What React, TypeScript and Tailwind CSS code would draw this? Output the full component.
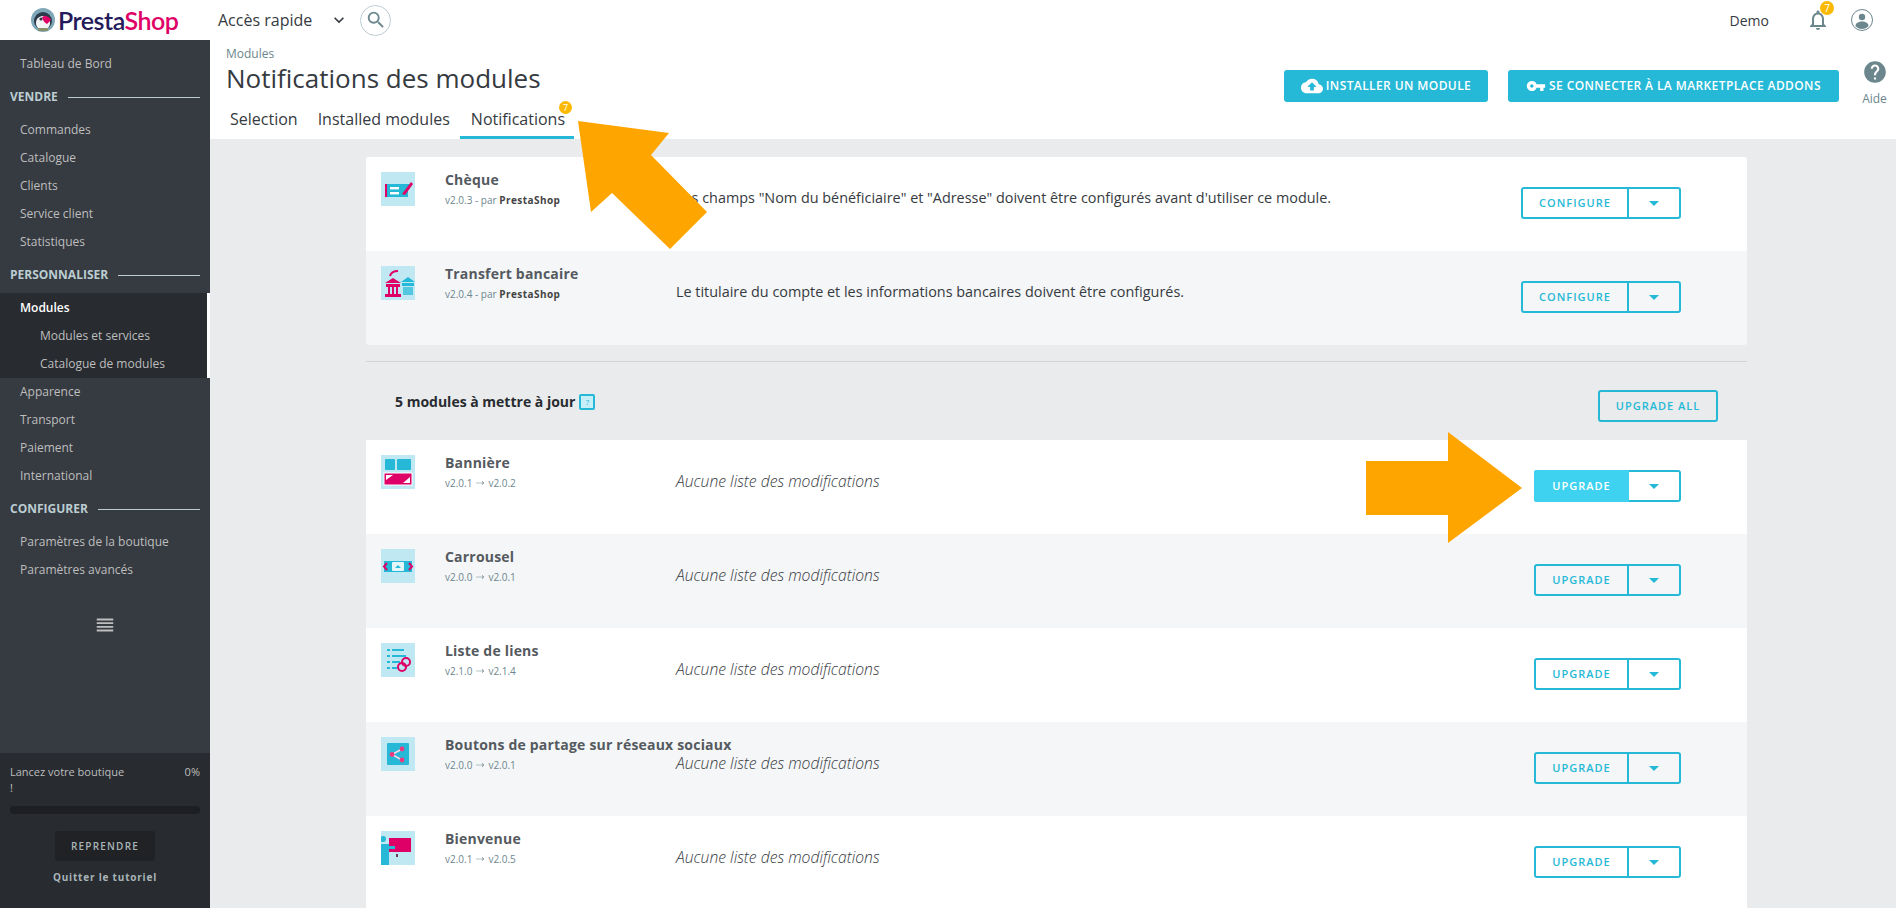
import {
  MdArrowDropDown,
  MdCloudUpload,
  MdHelp,
  MdKeyboardArrowDown,
  MdNotificationsNone,
  MdReorder,
  MdSearch,
  MdVpnKey,
} from 'react-icons/md';
import { HiArrowLongRight } from 'react-icons/hi2';
import type { ReactNode } from 'react';

const TEAL = '#25b9d7';
const PINK = '#df0067';

function Logo() {
  return (
    <div className="ml-[31px] flex w-[187px] items-center gap-[3px]">
      <svg width="24" height="24" viewBox="0 0 24 24" className="shrink-0">
        <circle cx="12" cy="12" r="12" fill="#7ea8b8" />
        <circle cx="12" cy="13" r="9" fill="#2c3a4a" />
        <path d="M5 15c0-5 4-7 7-7 4 0 7 3 7 7 0 4-3 7-7 7s-7-3-7-7z" fill="#f3f4f5" />
        <path d="M11 9c3-2 7-1 9 3l-4 4c-2-1-4-3-5-7z" fill={PINK} />
        <circle cx="10" cy="11" r="1.6" fill="#2c3a4a" />
        <rect x="7" y="20" width="10" height="3" rx="1" fill="#8a8f6a" />
      </svg>
      <span className="text-[25px] font-semibold leading-none tracking-[-0.5px] text-[#251b5b] font-['Lato',sans-serif]">
        Presta<span className="text-[#df0067]">Shop</span>
      </span>
    </div>
  );
}

function TopBar() {
  return (
    <header className="flex h-10 items-center bg-white">
      <Logo />
      <span className="text-[16px] text-[#363a41]">Accès rapide</span>
      <MdKeyboardArrowDown className="ml-[17px] text-[#363a41]" size={20} />
      <div className="ml-[11px] flex h-[31px] w-[31px] items-center justify-center rounded-full border border-[#bbcdd2] text-[#6c868e]">
        <MdSearch size={22} />
      </div>
      <span className="ml-auto text-[14px] text-[#363a41]">Demo</span>
      <div className="relative ml-[37px] text-[#6c868e]">
        <MdNotificationsNone size={24} />
        <span className="absolute -right-[4px] -top-[7px] flex h-[14px] w-[14px] items-center justify-center rounded-full bg-[#fcb900] text-[10px] text-white">
          7
        </span>
      </div>
      <svg width="22" height="22" viewBox="0 0 22 22" className="ml-[21px] mr-[23px]">
        <circle cx="11" cy="11" r="10.5" fill="none" stroke="#6c868e" />
        <circle cx="11" cy="8" r="3.2" fill="#6c868e" />
        <path d="M4.5 17c0-3 3-4.500 6.500-4.500s6.500 1.500 6.500 4.500c-1.500 2-4 3-6.500 3s-5-1-6.500-3z" fill="#6c868e" />
      </svg>
    </header>
  );
}

function NavItem({ label, sub, active }: { label: string; sub?: boolean; active?: boolean }) {
  return (
    <div
      className={
        'flex h-7 items-center text-[12px] ' +
        (sub ? 'pl-10 text-[#bebebe] ' : 'pl-5 ') +
        (active ? 'font-semibold text-white' : sub ? '' : 'text-[#bebebe]')
      }
    >
      {label}
    </div>
  );
}

function NavTitle({ label }: { label: string }) {
  return (
    <div className="flex h-9 items-center pl-[10px] pr-[10px] pt-[2px] text-[12px] font-bold text-[#bbcdd2]">
      <span>{label}</span>
      <span className="ml-[10px] h-px flex-1 bg-[#bbcdd2]" />
    </div>
  );
}

function Sidebar() {
  return (
    <aside className="flex w-[210px] shrink-0 flex-col bg-[#363a41]">
      <div className="pt-[10px]">
        <NavItem label="Tableau de Bord" />
      </div>
      <NavTitle label="VENDRE" />
      <div className="mt-[2px]">
        <NavItem label="Commandes" />
        <NavItem label="Catalogue" />
        <NavItem label="Clients" />
        <NavItem label="Service client" />
        <NavItem label="Statistiques" />
      </div>
      <NavTitle label="PERSONNALISER" />
      <div className="mt-[1px] border-r-[3px] border-white bg-[#282b30] pt-[1px]">
        <NavItem label="Modules" active />
        <NavItem label="Modules et services" sub />
        <NavItem label="Catalogue de modules" sub />
      </div>
      <NavItem label="Apparence" />
      <NavItem label="Transport" />
      <NavItem label="Paiement" />
      <NavItem label="International" />
      <NavTitle label="CONFIGURER" />
      <div className="mt-[2px]">
        <NavItem label="Paramètres de la boutique" />
        <NavItem label="Paramètres avancés" />
      </div>
      <div className="mt-[30px] flex justify-center text-[#bebebe]">
        <MdReorder size={22} />
      </div>
      <div className="mt-auto h-[155px] bg-[#282b30] px-[10px] pt-[11px] text-[#bebebe]">
        <div className="flex justify-between text-[11px] leading-[16px]">
          <span>
            Lancez votre boutique
            <br />!
          </span>
          <span>0%</span>
        </div>
        <div className="mt-[10px] h-2 rounded-full bg-[#1d1f23]" />
        <div className="mx-auto mt-[17px] flex h-[30px] w-[100px] items-center justify-center rounded-[3px] bg-[#202226] text-[10px] font-semibold tracking-[1.2px] text-[#a9b4b8]">
          REPRENDRE
        </div>
        <div className="mt-[9px] text-center text-[10px] font-bold tracking-[0.8px] text-[#a9b4b8]">
          Quitter le tutoriel
        </div>
      </div>
    </aside>
  );
}

function PageHead() {
  return (
    <div className="flex h-[99px] bg-white pl-4">
      <div className="flex-1">
        <div className="pt-[6px] text-[12px] leading-4 text-[#6c868e]">Modules</div>
        <h1 className="text-[26px] leading-[32px] text-[#363a41]">Notifications des modules</h1>
        <div className="mt-[10px] flex h-[35px] items-start text-[16px] leading-[30px] text-[#363a41]">
          <span className="ml-[4px]">Selection</span>
          <span className="ml-[20px]">Installed modules</span>
          <span className="relative ml-[10px] h-full border-b-[3px] border-[#25b9d7] pl-[11px] pr-[9px]">
            Notifications
            <span className="absolute -top-[3px] right-[2px] flex h-[13px] w-[13px] items-center justify-center rounded-full bg-[#fcb900] text-[9px] leading-none text-white">
              7
            </span>
          </span>
        </div>
      </div>
      <div className="mt-[30px] flex h-8 gap-5">
        <div className="flex w-[204px] items-center justify-center gap-[3px] rounded-[3px] bg-[#25b9d7] text-[12px] font-semibold tracking-[0.4px] text-white">
          <MdCloudUpload size={22} />
          INSTALLER UN MODULE
        </div>
        <div className="flex w-[331px] items-center justify-center gap-[3px] rounded-[3px] bg-[#25b9d7] text-[12px] font-semibold tracking-[0.4px] text-white">
          <MdVpnKey size={20} />
          SE CONNECTER À LA MARKETPLACE ADDONS
        </div>
      </div>
      <div className="ml-[22px] mr-[8px] mt-[19px] flex w-[27px] flex-col items-center text-[#6c868e]">
        <MdHelp size={26} />
        <span className="mt-[5px] text-[12px] text-[#6c868e]">Aide</span>
      </div>
    </div>
  );
}

function SplitButton({ label, active }: { label: string; active?: boolean }) {
  const wide = label === 'CONFIGURE';
  return (
    <div
      className={
        'flex h-8 rounded-[3px] border-2 border-[#25b9d7] text-[11px] font-semibold tracking-[1px] ' +
        (wide ? 'w-[160px]' : 'w-[147px]')
      }
    >
      {active ? (
        <div className="-my-[2px] -ml-[2px] flex w-[95px] items-center justify-center rounded-l-[3px] bg-[#3ed2f0] text-white">
          {label}
        </div>
      ) : (
        <div
          className={
            'flex items-center justify-center border-r-2 border-[#25b9d7] text-[#25b9d7] ' +
            (wide ? 'w-[106px]' : 'w-[93px]')
          }
        >
          {label}
        </div>
      )}
      <div className="flex flex-1 items-center justify-center text-[#25b9d7]">
        <MdArrowDropDown size={24} />
      </div>
    </div>
  );
}

function Icon({ children }: { children: ReactNode }) {
  return (
    <svg width="34" height="34" viewBox="0 0 34 34" className="shrink-0">
      <rect width="34" height="34" fill="#bfe8f2" />
      {children}
    </svg>
  );
}

const chequeIcon = (
  <Icon>
    <path d="M4 12h27l-4 6v7H4z" fill={TEAL} />
    <rect x="4" y="12" width="2" height="13" fill={PINK} />
    <rect x="9" y="15" width="9" height="2.4" fill="#fff" />
    <rect x="9" y="20" width="9" height="2.4" fill="#fff" />
    <path d="M21 22l9-12 2 2-8 11z" fill={PINK} />
  </Icon>
);
const bankIcon = (
  <Icon>
    <path d="M20 16l7-5 7 5zM21 17h12v3H21z" fill={TEAL} />
    <rect x="22" y="21" width="10" height="8" fill={TEAL} opacity="0.7" />
    <path d="M4 17l8-5 8 5zM5 18h14v3H5zM7 21h2v7H7zM11 21h2v7h-2zM15 21h2v7h-2zM4 28h16v3H4z" fill={PINK} />
    <path d="M9 10c1-4 4-5 8-5" stroke={PINK} strokeWidth="2" fill="none" />
  </Icon>
);
const bannerIcon = (
  <Icon>
    <rect x="4" y="4" width="10" height="11" rx="1" fill={TEAL} />
    <rect x="16" y="4" width="14" height="11" rx="1" fill={TEAL} />
    <rect x="3" y="18" width="28" height="12" fill={PINK} stroke="#fff" />
    <path d="M5 20h7l-7 5zM29 28h-7l7-6z" fill="#fff" />
  </Icon>
);
const carouselIcon = (
  <Icon>
    <rect x="3" y="12" width="28" height="11" fill={TEAL} />
    <rect x="11" y="13" width="12" height="9" rx="1" fill="#e6f7fb" />
    <path d="M14 19h6l-3-3z" fill={TEAL} />
    <path d="M6 14l-3 3.5 3 3.5M28 14l3 3.5-3 3.5" stroke={PINK} strokeWidth="2" fill="none" />
  </Icon>
);
const linksIcon = (
  <Icon>
    <g fill={TEAL}>
      <rect x="6" y="6" width="3" height="2" />
      <rect x="11" y="6" width="12" height="2" />
      <rect x="6" y="12" width="3" height="2" />
      <rect x="11" y="12" width="14" height="2" />
      <rect x="6" y="18" width="3" height="2" />
      <rect x="11" y="18" width="8" height="2" />
      <rect x="6" y="24" width="3" height="2" />
      <rect x="11" y="24" width="5" height="2" />
    </g>
    <circle cx="25" cy="19" r="4" fill="none" stroke={PINK} strokeWidth="2" />
    <circle cx="21" cy="24" r="4" fill="none" stroke={PINK} strokeWidth="2" />
  </Icon>
);
const shareIcon = (
  <Icon>
    <rect x="6" y="6" width="22" height="22" rx="1" fill={TEAL} />
    <path d="M21 12l-10 5.500 10 5.500" stroke="#fbd7e6" strokeWidth="1.6" fill="none" />
    <circle cx="21" cy="12" r="2.4" fill="#ec3a80" />
    <circle cx="11" cy="17.500" r="2.4" fill="#ec3a80" />
    <circle cx="21" cy="23" r="2.4" fill="#ec3a80" />
  </Icon>
);
const welcomeIcon = (
  <Icon>
    <rect x="8" y="7" width="22" height="14" fill={PINK} />
    <path d="M0 13h8v21H0zM6 15h8v3H6z" fill={TEAL} />
    <circle cx="2" cy="8" r="3" fill={TEAL} />
    <path d="M15 21l2-5" stroke={PINK} strokeWidth="1.5" />
    <path d="M15 23h2v3h-2z" fill="#6d3a52" />
  </Icon>
);

function Arrow() {
  return <HiArrowLongRight className="mx-[3px] inline align-[-1px]" size={10} />;
}

interface RowProps {
  icon: ReactNode;
  name: string;
  meta: ReactNode;
  desc: string;
  italic?: boolean;
  action: string;
  active?: boolean;
  alt?: boolean;
}

function ModuleRow({ icon, name, meta, desc, italic, action, active, alt }: RowProps) {
  return (
    <div className={'flex h-[94px] pl-[15px] pr-[66px] ' + (alt ? 'bg-[#f4f6f7]' : 'bg-white')}>
      <div className="mt-[15px]">{icon}</div>
      <div className="ml-[30px] w-[231px] shrink-0 whitespace-nowrap pt-[13px]">
        <div className="text-[14px] font-bold leading-5 tracking-[0.2px] text-[#555a60]">{name}</div>
        <div className="text-[10px] leading-5 text-[#6c868e]">{meta}</div>
      </div>
      <div
        className={
          'flex-1 whitespace-nowrap pt-[31px] leading-5 text-[#363a41] ' +
          (italic ? 'text-[15.7px] font-light italic' : 'text-[14.4px]')
        }
      >
        {desc}
      </div>
      <div className="mt-[30px]">
        <SplitButton label={action} active={active} />
      </div>
    </div>
  );
}

function version(from: string, to: string) {
  return (
    <>
      {from}
      <Arrow />
      {to}
    </>
  );
}

function author(v: string) {
  return (
    <>
      {v} - par <b className="font-bold tracking-[0.45px] text-[#444]">PrestaShop</b>
    </>
  );
}

const NO_CHANGELOG = 'Aucune liste des modifications';

function Content() {
  return (
    <main className="ml-[156px] w-[1381px] pt-[18px]">
      <div className="overflow-hidden rounded-[3px]">
        <ModuleRow
          icon={chequeIcon}
          name="Chèque"
          meta={author('v2.0.3')}
          desc={'Les champs "Nom du bénéficiaire" et "Adresse" doivent être configurés avant d\'utiliser ce module.'}
          action="CONFIGURE"
        />
        <ModuleRow
          icon={bankIcon}
          name="Transfert bancaire"
          meta={author('v2.0.4')}
          desc="Le titulaire du compte et les informations bancaires doivent être configurés."
          action="CONFIGURE"
          alt
        />
      </div>
      <div className="mt-4 h-px bg-[#d0d4d8]" />
      <div className="flex h-[78px] justify-between px-[29px]">
        <div className="flex h-[78px] items-start pt-[30px] text-[14px] font-bold leading-5 text-[#282b30]">
          5 modules à mettre à jour
          <span className="ml-[4px] mt-[2px] flex h-4 w-4 items-center justify-center rounded-[2px] border-2 border-[#25b9d7] bg-[#c7eff7] text-[8px] font-normal text-[#25b9d7]">
            ?
          </span>
        </div>
        <div className="mt-[28px] flex h-8 w-[120px] items-center justify-center rounded-[3px] border-2 border-[#25b9d7] text-[11px] font-semibold tracking-[1px] text-[#25b9d7]">
          UPGRADE ALL
        </div>
      </div>
      <ModuleRow icon={bannerIcon} name="Bannière" meta={version('v2.0.1', 'v2.0.2')} desc={NO_CHANGELOG} italic action="UPGRADE" active />
      <ModuleRow icon={carouselIcon} name="Carrousel" meta={version('v2.0.0', 'v2.0.1')} desc={NO_CHANGELOG} italic action="UPGRADE" alt />
      <ModuleRow icon={linksIcon} name="Liste de liens" meta={version('v2.1.0', 'v2.1.4')} desc={NO_CHANGELOG} italic action="UPGRADE" />
      <ModuleRow
        icon={shareIcon}
        name="Boutons de partage sur réseaux sociaux"
        meta={version('v2.0.0', 'v2.0.1')}
        desc={NO_CHANGELOG}
        italic
        action="UPGRADE"
        alt
      />
      <ModuleRow icon={welcomeIcon} name="Bienvenue" meta={version('v2.0.1', 'v2.0.5')} desc={NO_CHANGELOG} italic action="UPGRADE" />
    </main>
  );
}

export default function App() {
  return (
    <div className="relative flex h-[908px] flex-col overflow-hidden bg-[#eaebec] font-['Open_Sans',sans-serif]">
      <TopBar />
      <div className="flex min-h-0 flex-1">
        <Sidebar />
        <div className="min-w-0 flex-1">
          <PageHead />
          <Content />
        </div>
      </div>
      {/* annotation arrows painted over the screenshot */}
      <svg className="pointer-events-none absolute left-0 top-0" width="1896" height="908">
        <polygon points="578,121 669,133 651,155 707,212 670,249 612,193 591,212" fill="#ffa500" />
        <polygon points="1366,461 1448,461 1448,432 1522,488 1448,543 1448,515 1366,515" fill="#ffa500" />
      </svg>
    </div>
  );
}
